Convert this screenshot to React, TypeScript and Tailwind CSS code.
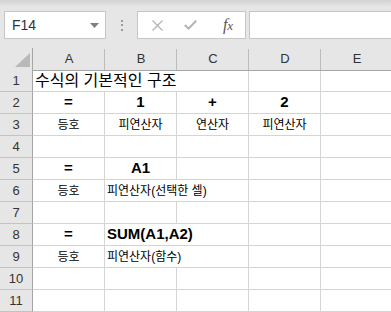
import React from "react";

const font = "font-['Liberation_Sans','Noto_Sans_CJK_KR',sans-serif]";

type Cell = { text?: string; span?: number; bold?: boolean; align?: "center" | "left"; big?: boolean };

const rows: Cell[][] = [
  [{ text: "수식의 기본적인 구조", span: 3, align: "left", big: true }, {}, {}],
  [
    { text: "=", bold: true },
    { text: "1", bold: true },
    { text: "+", bold: true },
    { text: "2", bold: true },
    {},
  ],
  [{ text: "등호" }, { text: "피연산자" }, { text: "연산자" }, { text: "피연산자" }, {}],
  [{}, {}, {}, {}, {}],
  [{ text: "=", bold: true }, { text: "A1", bold: true }, {}, {}, {}],
  [{ text: "등호" }, { text: "피연산자(선택한 셀)", span: 2, align: "left" }, {}, {}],
  [{}, {}, {}, {}, {}],
  [{ text: "=", bold: true }, { text: "SUM(A1,A2)", span: 2, align: "left", bold: true }, {}, {}],
  [{ text: "등호" }, { text: "피연산자(함수)", span: 2, align: "left" }, {}, {}],
  [{}, {}, {}, {}, {}],
  [{}, {}, {}, {}, {}],
];

const spanClass: Record<number, string> = { 1: "col-span-1", 2: "col-span-2", 3: "col-span-3" };

const Toolbar = () => (
  <div className="h-[48px] flex items-start pt-[11px] bg-[linear-gradient(#d3d3d3,#e6e6e6_7px)]">
    {/* name box */}
    <div className="ml-[4px] w-[102px] h-[28px] bg-white border border-[#c6c6c6] flex items-center justify-between pl-[7px] pr-[6px]">
      <span className="text-[14px] text-[#333]">F14</span>
      <svg width="9" height="5" viewBox="0 0 9 5">
        <path d="M0 0 H9 L4.5 5 Z" fill="#7f7f7f" />
      </svg>
    </div>
    {/* grip */}
    <div className="w-[31px] h-[28px] flex flex-col items-center justify-center gap-[2.5px]">
      <div className="w-[2px] h-[2px] bg-[#9c9c9c]" />
      <div className="w-[2px] h-[2px] bg-[#9c9c9c]" />
      <div className="w-[2px] h-[2px] bg-[#9c9c9c]" />
    </div>
    {/* cancel / enter / fx */}
    <div className="w-[109px] h-[28px] bg-white border border-[#c6c6c6] flex items-center">
      <div className="w-[37px] flex justify-center pl-[2px]">
        <svg width="11" height="11" viewBox="0 0 11 11">
          <path d="M0.5 0.5 L10.5 10.5 M10.5 0.5 L0.5 10.5" stroke="#b3b3b3" strokeWidth="1.3" />
        </svg>
      </div>
      <div className="w-[30px] flex justify-center">
        <svg width="13" height="10" viewBox="0 0 13 10">
          <path d="M0.8 5 L4.5 8.6 L12.2 0.8" stroke="#b3b3b3" strokeWidth="2" fill="none" />
        </svg>
      </div>
      <div className="flex-1 flex justify-center pl-[6px]">
        <span className="font-['Liberation_Serif',serif] italic text-[16px] text-[#555] leading-none">
          f<span className="text-[13px]">x</span>
        </span>
      </div>
    </div>
    {/* formula input */}
    <div className="ml-[3px] flex-1 h-[28px] bg-white border border-[#c6c6c6] -mr-[2px]" />
  </div>
);

const App = () => {
  const cols = ["A", "B", "C", "D", "E"];
  return (
    <div className={`w-[391px] h-[312px] overflow-hidden bg-white ${font}`}>
      <Toolbar />
      <div className="grid grid-cols-[33px_72px_72px_72px_72px_72px] auto-rows-[22px] w-[393px]">
        {/* header row */}
        <div className="h-[23px] bg-[#e6e6e6] border-r border-b border-[#a6a6a6] flex items-end justify-end pr-[2px] pb-[3px]">
          <svg width="15" height="14" viewBox="0 0 15 14">
            <path d="M15 0 V14 H0 Z" fill="#b9b9b9" />
          </svg>
        </div>
        {cols.map((c) => (
          <div
            key={c}
            className="h-[23px] bg-[#e6e6e6] border-b border-[#a6a6a6] flex items-center justify-center relative text-[13px] text-[#333]"
          >
            {c}
            <div className="absolute right-0 top-[1px] bottom-0 w-px bg-[#bcbcbc]" />
          </div>
        ))}

        {rows.map((row, ri) => (
          <React.Fragment key={ri}>
            <div className="bg-[#e6e6e6] border-r border-b border-r-[#a6a6a6] border-b-[#c3c3c3] flex items-center justify-center text-[13px] text-[#333]">
              {ri + 1}
            </div>
            {row.map((cell, ci) => (
              <div
                key={ci}
                className={`${spanClass[cell.span ?? 1]} border-r border-b border-[#d4d4d4] flex items-center whitespace-nowrap text-black ${
                  cell.align === "left" ? "justify-start pl-[2px]" : "justify-center"
                } ${cell.bold ? "font-bold text-[15px]" : cell.big ? "text-[16px]" : "text-[12px]"}`}
              >
                {cell.text}
              </div>
            ))}
          </React.Fragment>
        ))}
      </div>
    </div>
  );
};

export default App;
